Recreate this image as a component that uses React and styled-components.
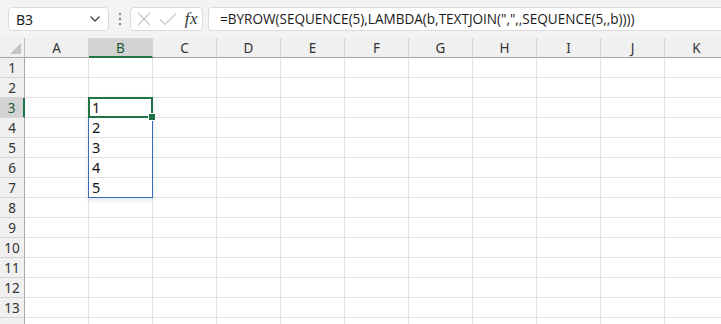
import React from 'react'
import styled, { createGlobalStyle } from 'styled-components'

const GlobalStyle = createGlobalStyle`
  html, body {
    margin: 0;
    padding: 0;
    background: #ffffff;
  }
  body {
    font-family: 'Noto Sans', 'Open Sans', sans-serif;
    overflow: hidden;
  }
`

const COLS = ['A', 'B', 'C', 'D', 'E', 'F', 'G', 'H', 'I', 'J', 'K']
const ROWS = 14
const LABELLED_ROWS = 13
const COL_W = 64
const ROW_H = 20
const HEAD_W = 25
const values = { 3: '1', 4: '2', 5: '3', 6: '4', 7: '5' }

const Page = styled.div`
  width: 721px;
  height: 324px;
  overflow: hidden;
`

const Toolbar = styled.div`
  height: 38px;
  background: #f3f3f3;
  display: flex;
  align-items: flex-start;
  padding: 7px 0 0 8px;
  box-sizing: border-box;
`

const Box = styled.div`
  height: 24px;
  box-sizing: border-box;
  background: #ffffff;
  border: 1px solid #dcdcdc;
  border-radius: 4px;
  display: flex;
  align-items: center;
  width: ${p => p.$w || 'auto'};
  flex: ${p => p.$grow ? '1' : 'none'};
  margin-right: ${p => p.$mr || 0}px;
  padding: 0 ${p => p.$px || 0}px;
`

const NameText = styled.span`
  font-size: 14px;
  color: #222;
  flex: 1;
`

const Dots = styled.div`
  width: 21px;
  display: flex;
  justify-content: center;
  padding-top: 5px;
`

const FormulaText = styled.span`
  font-family: 'Open Sans', sans-serif;
  font-size: 13.55px;
  color: #1a1a1a;
  white-space: nowrap;
`

const Fx = styled.span`
  font-family: 'Liberation Serif', serif;
  font-style: italic;
  font-size: 17px;
  color: #333;
  margin-left: auto;
  margin-right: 4px;
  letter-spacing: 0.5px;
`

const GridWrap = styled.div`
  position: relative;
  display: grid;
  grid-template-columns: ${HEAD_W}px repeat(${COLS.length}, ${COL_W}px);
  grid-auto-rows: ${ROW_H}px;
  font-family: 'Noto Sans', 'Open Sans', sans-serif;
`

const Corner = styled.div`
  background: #f0f0f0;
  border-right: 1px solid #bdbdbd;
  border-bottom: 1px solid #a8a8a8;
  box-sizing: border-box;
  position: relative;
  &::after {
    content: '';
    position: absolute;
    right: 3px;
    bottom: 3px;
    width: 0;
    height: 0;
    border-left: 11px solid transparent;
    border-bottom: 11px solid #c4c4c4;
  }
`

const ColHead = styled.div`
  background: ${p => p.$sel ? '#d3d3d3' : '#f0f0f0'};
  border-right: 1px solid #d4d4d4;
  border-bottom: ${p => p.$sel ? '2px solid #217346' : '1px solid #a8a8a8'};
  box-sizing: border-box;
  display: flex;
  align-items: center;
  justify-content: center;
  font-size: 13.5px;
  color: ${p => p.$sel ? '#1e5c38' : '#333'};
  padding-top: ${p => p.$sel ? 1 : 0}px;
`

const RowHead = styled.div`
  background: ${p => p.$sel ? '#d3d3d3' : '#f0f0f0'};
  border-right: ${p => p.$sel ? '2px solid #217346' : '1px solid #a8a8a8'};
  border-bottom: 1px solid #d4d4d4;
  box-sizing: border-box;
  display: flex;
  align-items: center;
  justify-content: center;
  font-size: 13.5px;
  color: ${p => p.$sel ? '#1e5c38' : '#333'};
`

const Cell = styled.div`
  border-right: 1px solid #e1e1e1;
  border-bottom: 1px solid #e1e1e1;
  box-sizing: border-box;
  font-size: 14.5px;
  color: #111;
  padding-left: 3px;
  display: flex;
  align-items: center;
  line-height: 1;
`

const SpillRange = styled.div`
  position: absolute;
  border: 1px solid #3a6db5;
  box-sizing: border-box;
  box-shadow: 0 2px 4px rgba(58, 109, 181, 0.18);
  pointer-events: none;
`

const ActiveCell = styled.div`
  position: absolute;
  border: 2px solid #217346;
  box-sizing: border-box;
  pointer-events: none;
`

const FillHandle = styled.div`
  position: absolute;
  width: 6px;
  height: 6px;
  background: #217346;
  border: 1px solid #ffffff;
  box-sizing: content-box;
  right: -5px;
  bottom: -5px;
`

function Chevron() {
  return (
    <svg width="12" height="8" viewBox="0 0 12 8">
      <path d="M1.5 1.5 L6 6 L10.5 1.5" fill="none" stroke="#444" strokeWidth="1.3" />
    </svg>
  )
}

function VDots() {
  return (
    <svg width="4" height="14" viewBox="0 0 4 14">
      <circle cx="2" cy="2" r="1.2" fill="#8a8a8a" />
      <circle cx="2" cy="7" r="1.2" fill="#8a8a8a" />
      <circle cx="2" cy="12" r="1.2" fill="#8a8a8a" />
    </svg>
  )
}

function Cross() {
  return (
    <svg width="14" height="14" viewBox="0 0 14 14" style={{ marginLeft: 6 }}>
      <path d="M1 1 L13 13 M13 1 L1 13" stroke="#c8c8c8" strokeWidth="1.2" />
    </svg>
  )
}

function Check() {
  return (
    <svg width="18" height="14" viewBox="0 0 18 14" style={{ marginLeft: 8 }}>
      <path d="M1 7.5 L6 12.5 L17 1.5" fill="none" stroke="#c8c8c8" strokeWidth="1.2" />
    </svg>
  )
}

export default function App() {
  const cells = []
  cells.push(<Corner key="corner" />)
  COLS.forEach(c => cells.push(<ColHead key={'h' + c} $sel={c === 'B'}>{c}</ColHead>))
  for (let r = 1; r <= ROWS; r++) {
    // the last row only peeks in at the bottom edge, so no label for it
    cells.push(<RowHead key={'r' + r} $sel={r === 3}>{r <= LABELLED_ROWS ? r : ''}</RowHead>)
    COLS.forEach(c => {
      cells.push(
        <Cell key={c + r}>{c === 'B' && values[r] ? values[r] : ''}</Cell>
      )
    })
  }

  const bx = HEAD_W + COL_W - 1
  const top3 = ROW_H * 3 - 1

  return (
    <Page>
      <GlobalStyle />
      <Toolbar>
        <Box $w="101px" $px={7}>
          <NameText>B3</NameText>
          <Chevron />
        </Box>
        <Dots><VDots /></Dots>
        <Box $w="73px" $mr={5}>
          <Cross />
          <Check />
          <Fx>fx</Fx>
        </Box>
        <Box $grow $px={11} style={{ borderRight: 'none', borderRadius: '4px 0 0 4px' }}>
          <FormulaText>=BYROW(SEQUENCE(5),LAMBDA(b,TEXTJOIN(",",,SEQUENCE(5,,b))))</FormulaText>
        </Box>
      </Toolbar>
      <GridWrap>
        {cells}
        <SpillRange style={{ left: bx, top: top3, width: COL_W + 1, height: ROW_H * 5 + 1 }} />
        <ActiveCell style={{ left: bx, top: top3, width: COL_W + 1, height: ROW_H + 1 }}>
          <FillHandle />
        </ActiveCell>
      </GridWrap>
    </Page>
  )
}
